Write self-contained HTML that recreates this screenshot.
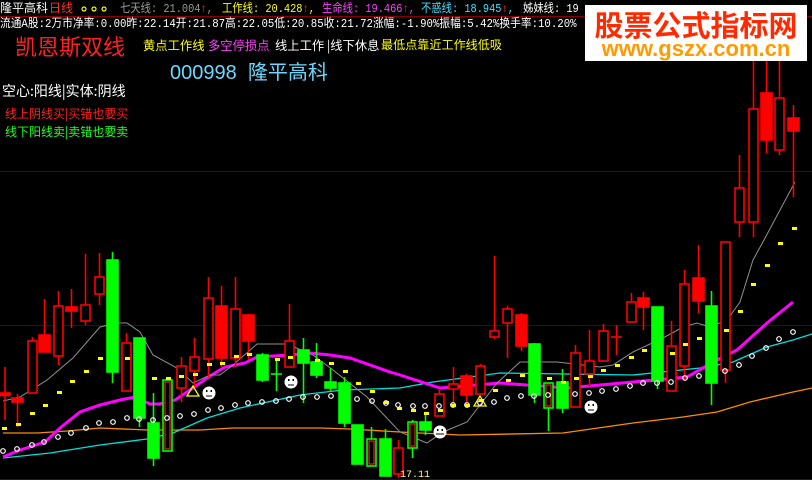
<!DOCTYPE html>
<html><head><meta charset="utf-8"><style>
html,body{margin:0;padding:0;background:#000;width:812px;height:480px;overflow:hidden}
.t{position:absolute;white-space:nowrap;font-family:"Liberation Mono","Noto Sans CJK SC",monospace;line-height:1}
</style></head><body>
<div style="position:relative;width:812px;height:480px;background:#000">
<svg width="812" height="480" style="position:absolute;left:0;top:0" xmlns="http://www.w3.org/2000/svg">
<line x1="0" y1="16.5" x2="812" y2="16.5" stroke="#8a0000"/>
<line x1="0" y1="171.5" x2="812" y2="171.5" stroke="#5a0000"/>
<line x1="0" y1="325.5" x2="812" y2="325.5" stroke="#5a0000"/>
<line x1="0" y1="479.5" x2="812" y2="479.5" stroke="#5a0000"/>
<polyline fill="none" stroke="#ff8c00" stroke-width="1.3" points="3,433 37,433 67,431 100,428 147,430 200,430 233,428 320,428 350,429 383,431 400,432 460,435 563,433 633,423 683,417 717,412 750,402 793,392 812,388"/>
<polyline fill="none" stroke="#00e0e0" stroke-width="1.3" points="3,458 50,453 100,445 147,439 173,433 207,418 240,408 300,395 343,390 400,388 433,382 500,373 633,375 700,368 733,362 767,347 793,340 812,334"/>
<polyline fill="none" stroke="#ff00ff" stroke-width="3" points="3,457 20,450 45,442 60,428 80,412 100,405 120,400 135,397 150,404 160,404 175,400 190,390 210,376 225,367 245,363 257,357 290,355 310,353 330,355 350,358 370,365 390,372 400,375 440,388 500,383 567,388 633,382 687,377 717,360 737,350 767,323 793,302"/>
<polyline fill="none" stroke="#909090" stroke-width="1" points="3,401 20,397 47,380 73,358 100,327 117,323 127,323 140,332 153,355 177,368 193,383 210,375 220,375 233,365 257,344 287,344 313,355 333,370 367,397 400,432 427,443 443,432 467,422 497,383 520,362 557,362 600,367 613,365 633,352 663,338 683,327 697,323 710,327 727,320 740,302 753,260 764,240 780,210 795,182"/>
<g stroke-width="1.6">
<g stroke="#ff0000" fill="#ff0000">
<line x1="5" y1="367" x2="5" y2="420"/><rect x="0" y="393" width="10" height="2.5"/>
<line x1="17.5" y1="394" x2="17.5" y2="427"/><rect x="12" y="398" width="11" height="4"/>
<line x1="44.5" y1="299" x2="44.5" y2="352"/><rect x="39" y="335" width="11" height="17"/>
<line x1="71.5" y1="289" x2="71.5" y2="328"/><rect x="66" y="307" width="11" height="4"/>
<line x1="221.5" y1="286" x2="221.5" y2="367"/><rect x="216" y="306" width="11" height="52"/>
<line x1="248.5" y1="314" x2="248.5" y2="360"/><rect x="243" y="315" width="11" height="26"/>
<line x1="466.5" y1="374" x2="466.5" y2="407"/><rect x="461" y="376" width="11" height="19"/>
<line x1="521.5" y1="313" x2="521.5" y2="351"/><rect x="516" y="315" width="11" height="31"/>
<line x1="643.5" y1="292" x2="643.5" y2="330"/><rect x="638" y="298" width="11" height="9"/>
<line x1="698.5" y1="245" x2="698.5" y2="313"/><rect x="693" y="278" width="11" height="23"/>
<line x1="766.5" y1="61" x2="766.5" y2="153"/><rect x="761" y="93" width="11" height="47"/>
<line x1="793.5" y1="105" x2="793.5" y2="197"/><rect x="788" y="118" width="11" height="13"/>
<line x1="616.5" y1="325" x2="616.5" y2="355"/><line x1="611" y1="337" x2="622" y2="337"/>
</g>
<g stroke="#ff0000" fill="#000">
<line x1="32.5" y1="337" x2="32.5" y2="393"/><rect x="28" y="341" width="9" height="52"/>
<line x1="58.5" y1="291" x2="58.5" y2="365"/><rect x="54" y="306" width="9" height="50"/>
<line x1="85.5" y1="254" x2="85.5" y2="325"/><rect x="81" y="305" width="9" height="16"/>
<line x1="99.5" y1="253" x2="99.5" y2="305"/><rect x="95" y="277" width="9" height="17"/>
<line x1="126.5" y1="333" x2="126.5" y2="389"/><rect x="122" y="343" width="9" height="48"/>
<line x1="181.5" y1="357" x2="181.5" y2="402"/><rect x="177" y="366" width="9" height="22"/>
<line x1="194.5" y1="338" x2="194.5" y2="387"/><rect x="190" y="357" width="9" height="14"/>
<line x1="208.5" y1="277" x2="208.5" y2="377"/><rect x="204" y="298" width="9" height="61"/>
<line x1="235.5" y1="277" x2="235.5" y2="367"/><rect x="231" y="309" width="9" height="49"/>
<line x1="289.5" y1="304" x2="289.5" y2="367"/><rect x="285" y="341" width="9" height="26"/>
<line x1="398.5" y1="440" x2="398.5" y2="478"/><rect x="394" y="448" width="9" height="26"/>
<line x1="439.5" y1="390" x2="439.5" y2="416"/><rect x="435" y="394" width="9" height="22"/>
<line x1="453.5" y1="367" x2="453.5" y2="407"/><rect x="449" y="384" width="9" height="5"/>
<line x1="480.5" y1="364" x2="480.5" y2="394"/><rect x="476" y="366" width="9" height="28"/>
<line x1="494.5" y1="256" x2="494.5" y2="339"/><rect x="490" y="331" width="9" height="6"/>
<line x1="507.5" y1="306" x2="507.5" y2="358"/><rect x="503" y="309" width="9" height="14"/>
<line x1="575.5" y1="345" x2="575.5" y2="407"/><rect x="571" y="353" width="9" height="54"/>
<line x1="589.5" y1="330" x2="589.5" y2="387"/><rect x="585" y="361" width="9" height="13"/>
<line x1="603.5" y1="324" x2="603.5" y2="361"/><rect x="599" y="331" width="9" height="30"/>
<line x1="631.5" y1="293" x2="631.5" y2="322"/><rect x="627" y="302" width="9" height="20"/>
<line x1="671.5" y1="321" x2="671.5" y2="391"/><rect x="667" y="346" width="9" height="45"/>
<line x1="684.5" y1="270" x2="684.5" y2="380"/><rect x="680" y="284" width="9" height="82"/>
<line x1="725.5" y1="242" x2="725.5" y2="383"/><rect x="721" y="242" width="9" height="128"/>
<line x1="739.5" y1="155" x2="739.5" y2="237"/><rect x="735" y="188" width="9" height="34"/>
<line x1="753.5" y1="61" x2="753.5" y2="237"/><rect x="749" y="109" width="9" height="113"/>
<line x1="779.5" y1="61" x2="779.5" y2="155"/><rect x="775" y="98" width="9" height="52"/>
</g>
<g stroke="#00ff00" fill="#00ff00">
<line x1="112.5" y1="252" x2="112.5" y2="383"/><rect x="107" y="260" width="11" height="112"/>
<line x1="139.5" y1="338" x2="139.5" y2="427"/><rect x="134" y="338" width="11" height="80"/>
<line x1="153.5" y1="393" x2="153.5" y2="466"/><rect x="148" y="423" width="11" height="35"/>
<line x1="262.5" y1="353" x2="262.5" y2="382"/><rect x="257" y="355" width="11" height="25"/>
<line x1="276.5" y1="361" x2="276.5" y2="391"/><line x1="271" y1="374" x2="282" y2="374"/>
<line x1="303.5" y1="338" x2="303.5" y2="403"/><rect x="298" y="350" width="11" height="13"/>
<line x1="316.5" y1="343" x2="316.5" y2="378"/><rect x="311" y="362" width="11" height="13"/>
<line x1="330.5" y1="368" x2="330.5" y2="392"/><rect x="325" y="382" width="11" height="6"/>
<line x1="344.5" y1="377" x2="344.5" y2="427"/><rect x="339" y="383" width="11" height="40"/>
<rect x="352" y="425" width="11" height="39"/>
<line x1="385.5" y1="429" x2="385.5" y2="476"/><rect x="380" y="439" width="11" height="37"/>
<line x1="425.5" y1="412" x2="425.5" y2="435"/><rect x="420" y="422" width="11" height="8"/>
<line x1="534.5" y1="343" x2="534.5" y2="403"/><rect x="529" y="344" width="11" height="51"/>
<line x1="562.5" y1="369" x2="562.5" y2="413"/><rect x="557" y="382" width="11" height="26"/>
<line x1="657.5" y1="307" x2="657.5" y2="389"/><rect x="652" y="307" width="11" height="74"/>
<line x1="711.5" y1="291" x2="711.5" y2="405"/><rect x="706" y="306" width="11" height="77"/>
</g>
<g stroke="#00ff00" fill="#000">
<rect x="163" y="380" width="9" height="71"/>
<line x1="371.5" y1="427" x2="371.5" y2="439"/><rect x="367" y="439" width="9" height="27"/>
<line x1="412.5" y1="420" x2="412.5" y2="458"/><rect x="408" y="422" width="9" height="26"/>
<line x1="548.5" y1="383" x2="548.5" y2="431"/><rect x="544" y="383" width="9" height="25"/>
</g>
<g stroke="#ff3030" stroke-width="1" fill="none">
<rect x="165" y="382" width="5" height="67"/><rect x="369" y="441" width="5" height="23"/><rect x="410" y="424" width="5" height="22"/><rect x="546" y="385" width="5" height="21"/>
</g>
</g>
<g fill="none" stroke="#fff" stroke-width="1.2">
<circle cx="3" cy="451" r="2.3"/><circle cx="17" cy="449" r="2.3"/><circle cx="32" cy="445" r="2.3"/><circle cx="44" cy="442" r="2.3"/><circle cx="58" cy="437" r="2.3"/><circle cx="71" cy="433" r="2.3"/><circle cx="86" cy="428" r="2.3"/><circle cx="99" cy="423" r="2.3"/><circle cx="113" cy="422" r="2.3"/><circle cx="127" cy="418" r="2.3"/><circle cx="139" cy="419" r="2.3"/><circle cx="153" cy="420" r="2.3"/><circle cx="167" cy="418" r="2.3"/><circle cx="180" cy="416" r="2.3"/><circle cx="194" cy="414" r="2.3"/><circle cx="208" cy="410" r="2.3"/><circle cx="221" cy="408" r="2.3"/><circle cx="235" cy="405" r="2.3"/><circle cx="248" cy="403" r="2.3"/><circle cx="262" cy="402" r="2.3"/><circle cx="276" cy="401" r="2.3"/><circle cx="289" cy="399" r="2.3"/><circle cx="303" cy="397" r="2.3"/><circle cx="317" cy="397" r="2.3"/><circle cx="331" cy="396" r="2.3"/><circle cx="357" cy="399" r="2.3"/><circle cx="372" cy="401" r="2.3"/><circle cx="386" cy="403" r="2.3"/><circle cx="398" cy="405" r="2.3"/><circle cx="413" cy="406" r="2.3"/><circle cx="425" cy="406" r="2.3"/><circle cx="439" cy="406" r="2.3"/><circle cx="453" cy="405" r="2.3"/><circle cx="467" cy="405" r="2.3"/><circle cx="480" cy="403" r="2.3"/><circle cx="494" cy="402" r="2.3"/><circle cx="507" cy="398" r="2.3"/><circle cx="521" cy="396" r="2.3"/><circle cx="534" cy="396" r="2.3"/><circle cx="548" cy="395" r="2.3"/><circle cx="575" cy="394" r="2.3"/><circle cx="589" cy="393" r="2.3"/><circle cx="602" cy="391" r="2.3"/><circle cx="616" cy="389" r="2.3"/><circle cx="630" cy="386" r="2.3"/><circle cx="643" cy="383" r="2.3"/><circle cx="657" cy="383" r="2.3"/><circle cx="671" cy="382" r="2.3"/><circle cx="685" cy="378" r="2.3"/><circle cx="699" cy="376" r="2.3"/><circle cx="725" cy="371" r="2.3"/><circle cx="739" cy="365" r="2.3"/><circle cx="752" cy="356" r="2.3"/><circle cx="766" cy="348" r="2.3"/><circle cx="779" cy="339" r="2.3"/><circle cx="793" cy="332" r="2.3"/>
</g>
<g fill="#ffff00">
<rect x="2" y="427" width="5" height="3"/><rect x="16" y="423" width="5" height="3"/><rect x="30" y="412" width="5" height="3"/><rect x="43" y="404" width="5" height="3"/><rect x="57" y="391" width="5" height="3"/><rect x="70" y="380" width="5" height="3"/><rect x="84" y="370" width="5" height="3"/><rect x="98" y="357" width="5" height="3"/><rect x="125" y="357" width="5" height="3"/><rect x="152" y="377" width="5" height="3"/><rect x="166" y="377" width="5" height="3"/><rect x="179" y="375" width="5" height="3"/><rect x="193" y="373" width="5" height="3"/><rect x="207" y="363" width="5" height="3"/><rect x="220" y="362" width="5" height="3"/><rect x="234" y="355" width="5" height="3"/><rect x="247" y="353" width="5" height="3"/><rect x="275" y="358" width="5" height="3"/><rect x="288" y="356" width="5" height="3"/><rect x="315" y="359" width="5" height="3"/><rect x="329" y="362" width="5" height="3"/><rect x="343" y="370" width="5" height="3"/><rect x="356" y="382" width="5" height="3"/><rect x="370" y="390" width="5" height="3"/><rect x="384" y="401" width="5" height="3"/><rect x="397" y="407" width="5" height="3"/><rect x="411" y="409" width="5" height="3"/><rect x="424" y="412" width="5" height="3"/><rect x="438" y="409" width="5" height="3"/><rect x="451" y="404" width="5" height="3"/><rect x="465" y="404" width="5" height="3"/><rect x="479" y="399" width="5" height="3"/><rect x="493" y="389" width="5" height="3"/><rect x="506" y="379" width="5" height="3"/><rect x="520" y="374" width="5" height="3"/><rect x="547" y="377" width="5" height="3"/><rect x="561" y="381" width="5" height="3"/><rect x="574" y="377" width="5" height="3"/><rect x="588" y="375" width="5" height="3"/><rect x="601" y="369" width="5" height="3"/><rect x="615" y="364" width="5" height="3"/><rect x="629" y="356" width="5" height="3"/><rect x="642" y="349" width="5" height="3"/><rect x="670" y="352" width="5" height="3"/><rect x="683" y="343" width="5" height="3"/><rect x="697" y="337" width="5" height="3"/><rect x="724" y="329" width="5" height="3"/><rect x="738" y="310" width="5" height="3"/><rect x="751" y="283" width="5" height="3"/><rect x="765" y="264" width="5" height="3"/><rect x="778" y="242" width="5" height="3"/><rect x="792" y="227" width="5" height="3"/>
</g>
<g fill="none" stroke="#ffff00" stroke-width="1.3">
<polygon points="193,386 187,396 199,396"/><polygon points="480,396 474,406 486,406"/>
</g>
<g>
<circle cx="209" cy="393" r="6.5" fill="#fff"/><rect x="206" y="390" width="1.5" height="2" fill="#000"/><rect x="210.5" y="390" width="1.5" height="2" fill="#000"/><line x1="206" y1="396" x2="212" y2="396" stroke="#000"/>
<circle cx="291" cy="382" r="6.5" fill="#fff"/><rect x="288" y="379" width="1.5" height="2" fill="#000"/><rect x="292.5" y="379" width="1.5" height="2" fill="#000"/><line x1="288" y1="385" x2="294" y2="385" stroke="#000"/>
<circle cx="440" cy="432" r="6.5" fill="#fff"/><rect x="437" y="429" width="1.5" height="2" fill="#000"/><rect x="441.5" y="429" width="1.5" height="2" fill="#000"/><line x1="436" y1="434" x2="444" y2="434" stroke="#000"/>
<circle cx="591" cy="407" r="6.5" fill="#fff"/><rect x="588" y="404" width="1.5" height="2" fill="#000"/><rect x="592.5" y="404" width="1.5" height="2" fill="#000"/><line x1="588" y1="410" x2="594" y2="410" stroke="#000"/>
</g>
<g fill="none" stroke="#ffff00" stroke-width="1.2"><circle cx="84" cy="9" r="2"/><circle cx="94" cy="9" r="2"/><circle cx="104" cy="9" r="2"/></g>
<rect x="585" y="5" width="222" height="56" fill="#fff"/>
<text x="696" y="36" text-anchor="middle" font-family="'Noto Sans CJK SC',sans-serif" font-weight="bold" font-size="29" fill="#ff2a00">股票公式指标网</text>
<text x="696" y="56" text-anchor="middle" font-family="'Liberation Sans',sans-serif" font-weight="bold" font-size="22" fill="#ff9a00">www.gszx.com.cn</text>
</svg>
<div class="t" style="left:0;top:2px;font-size:12px;color:#fff;font-family:'Noto Sans CJK SC',sans-serif">隆平高科</div>
<div class="t" style="left:49px;top:2px;font-size:12px;color:#ff3030;font-family:'Noto Sans CJK SC',sans-serif">日线</div>
<div class="t" style="left:120px;top:3px;font-size:12px;color:#9a9a9a;transform:scaleX(0.86);transform-origin:0 0">七天线: 21.004<span style="color:#ff3030">↑</span>,</div>
<div class="t" style="left:222px;top:3px;font-size:12px;color:#ffff00;transform:scaleX(0.86);transform-origin:0 0">工作线: 20.428<span style="color:#ff3030">↑</span>,</div>
<div class="t" style="left:322px;top:3px;font-size:12px;color:#ff40ff;transform:scaleX(0.86);transform-origin:0 0">生命线: 19.466<span style="color:#ff3030">↑</span>,</div>
<div class="t" style="left:421px;top:3px;font-size:12px;color:#40e0ff;transform:scaleX(0.86);transform-origin:0 0">不惑线: 18.945<span style="color:#ff3030">↑</span>,</div>
<div class="t" style="left:523px;top:3px;font-size:12px;color:#fff;transform:scaleX(0.86);transform-origin:0 0">姊妹线: 19</div>
<div class="t" style="left:0;top:18px;font-size:12px;color:#fff;transform:scaleX(0.893);transform-origin:0 0">流通A股:2万市净率:0.00昨:22.14开:21.87高:22.05低:20.85收:21.72涨幅:-1.90%振幅:5.42%换手率:10.20%</div>
<div class="t" style="left:15px;top:35px;font-size:22px;color:#ff2020;font-family:'Noto Sans CJK SC',sans-serif">凯恩斯双线</div>
<div class="t" style="left:143px;top:39px;font-size:12.3px;color:#ffff00;font-family:'Noto Sans CJK SC',sans-serif">黄点工作线</div>
<div class="t" style="left:208px;top:39px;font-size:12.3px;color:#ff40ff;font-family:'Noto Sans CJK SC',sans-serif">多空停损点</div>
<div class="t" style="left:275px;top:39px;font-size:12.3px;color:#fff;font-family:'Noto Sans CJK SC',sans-serif">线上工作 |线下休息</div>
<div class="t" style="left:381px;top:39px;font-size:12.1px;color:#ffff00;font-family:'Noto Sans CJK SC',sans-serif">最低点靠近工作线低吸</div>
<div class="t" style="left:170px;top:63px;font-size:20px;color:#6cd8ff;font-family:'Liberation Sans','Noto Sans CJK SC',sans-serif">000998 &nbsp;隆平高科</div>
<div class="t" style="left:2px;top:84px;font-size:14px;color:#fff;font-family:'Noto Sans CJK SC',sans-serif">空心:阳线|实体:阴线</div>
<div class="t" style="left:5px;top:108px;font-size:12px;color:#ff2020;font-family:'Noto Sans CJK SC',sans-serif">线上阴线买|买错也要买</div>
<div class="t" style="left:5px;top:126px;font-size:12px;color:#20ff20;font-family:'Noto Sans CJK SC',sans-serif">线下阳线卖|卖错也要卖</div>
<div class="t" style="left:400px;top:471px;font-size:10px;color:#ffff60">17.11</div>
</div>
</body></html>
